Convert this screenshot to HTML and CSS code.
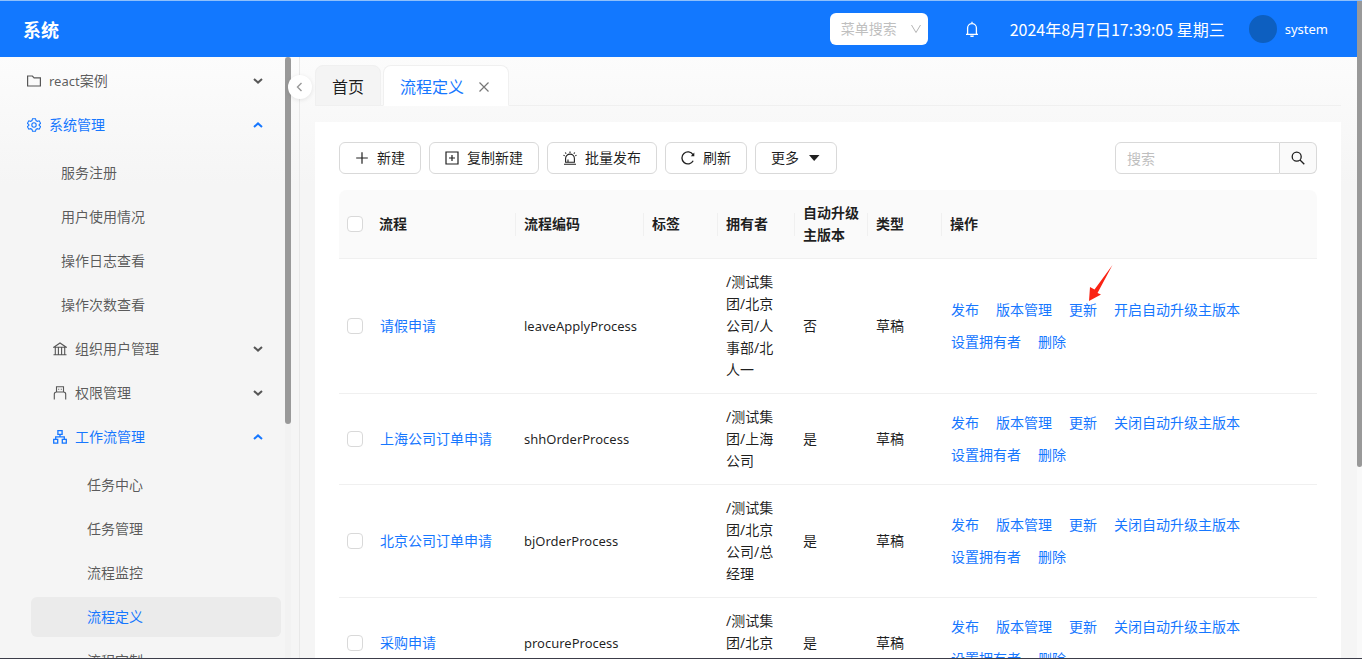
FILE: index.html
```
<!DOCTYPE html>
<html lang="zh-CN">
<head>
<meta charset="utf-8">
<title>系统</title>
<link rel="stylesheet" href="styles.css">
</head>
<body>
<svg class="defs" aria-hidden="true">
  <symbol id="down" viewBox="0 0 10 6"><path d="M1 1l4 3.600L9 1" fill="none" stroke="currentColor" stroke-width="2"/></symbol>
  <symbol id="up" viewBox="0 0 10 6"><path d="M1 5l4-3.600L9 5" fill="none" stroke="currentColor" stroke-width="2"/></symbol>
</svg>
<div class="app">
  <header class="header">
    <h1 class="brand">系统</h1>
    <div class="picker">
      <select class="picker-select" aria-label="菜单搜索"><option>菜单搜索</option></select>
      <svg class="picker-arrow" viewBox="0 0 12 12"><path d="M1.500 2L6 9.500 10.500 2" fill="none" stroke="currentColor"/></svg>
    </div>
    <button class="bell" aria-label="通知">
      <svg viewBox="0 0 16 16" width="16" height="16" fill="none" stroke="currentColor" stroke-width="1.300"><path d="M2 13.300h12M3.600 13V7a4.400 4.400 0 0 1 8.800 0v6M8 2.600V.8M6.500 14.600a1.600 1.200 0 0 0 3 0"/></svg>
    </button>
    <time class="clock">2024年8月7日17:39:05 星期三</time>
    <a class="user" href="#"><span class="avatar"></span><span class="latin">system</span></a>
  </header>
  <div class="body">
    <aside class="sidebar">
      <nav class="menu">
        <ul>
          <li><button class="item"><svg class="icon" viewBox="0 0 14 14" fill="none" stroke="currentColor" stroke-width="1.200"><path d="M.6 2h4.800l1.700 1.800h6.300v8.200H.6z"/></svg><span><span class="latin">react</span>案例</span><svg class="caret"><use href="#down"/></svg></button></li>
          <li>
            <button class="item open"><svg class="icon" viewBox="0 0 14 14" fill="none" stroke="currentColor" stroke-width="1.100"><path d="M5.500.7h3l.5 1.900 1.300.7 1.900-.5 1.400 2.500L12.200 6.600v.8l1.400 1.300-1.400 2.500-1.900-.5-1.300.7-.5 1.900h-3L5 11.400l-1.300-.7-1.900.5L.4 8.700l1.400-1.300v-.8L.4 5.300l1.400-2.500 1.900.5L5 2.600z"/><circle cx="7" cy="7" r="2.200"/></svg>系统管理<svg class="caret"><use href="#up"/></svg></button>
            <ul class="sub">
              <li><a class="item" href="#">服务注册</a></li>
              <li><a class="item" href="#">用户使用情况</a></li>
              <li><a class="item" href="#">操作日志查看</a></li>
              <li><a class="item" href="#">操作次数查看</a></li>
              <li><button class="item nested"><svg class="icon" viewBox="0 0 14 14" fill="none" stroke="currentColor" stroke-width="1.100"><path d="M.8 5.200L7 1l6.200 4.200zM.5 12.800h13M2.300 5.200v7.500M5.400 5.200v7.500M8.600 5.200v7.500M11.700 5.200v7.500"/></svg>组织用户管理<svg class="caret"><use href="#down"/></svg></button></li>
              <li><button class="item nested"><svg class="icon" viewBox="0 0 14 14" fill="none" stroke="currentColor" stroke-width="1.100"><path d="M3.500 6V.8h7V6M1.300 13.500V8.200Q1.300 6 3.500 6h7q2.200 0 2.200 2.200v5.300M5.200 3.200h1M7.800 3.200h1"/></svg>权限管理<svg class="caret"><use href="#down"/></svg></button></li>
              <li>
                <button class="item nested open"><svg class="icon" viewBox="0 0 14 14" fill="none" stroke="currentColor" stroke-width="1.300"><path d="M4.900.7h4.200v3.600H4.900zM.7 9.300h4v3.800h-4zM9.300 9.300h4v3.800h-4zM7 4.300v2.500M2.700 9.300V6.800h8.600v2.500"/></svg>工作流管理<svg class="caret"><use href="#up"/></svg></button>
                <ul class="sub deep">
                  <li><a class="item" href="#">任务中心</a></li>
                  <li><a class="item" href="#">任务管理</a></li>
                  <li><a class="item" href="#">流程监控</a></li>
                  <li><a class="item selected" href="#" aria-current="page">流程定义</a></li>
                  <li><a class="item" href="#">流程定制</a></li>
                </ul>
              </li>
            </ul>
          </li>
        </ul>
      </nav>
      <div class="side-scroll"><div class="side-thumb"></div></div>
      <button class="collapse" aria-label="收起菜单"><svg viewBox="0 0 10 10" width="10" height="10"><path d="M6.500 1L2.500 5l4 4" fill="none" stroke="currentColor" stroke-width="1.400"/></svg></button>
    </aside>
    <main class="main">
      <div class="tabs" role="tablist">
        <button class="tab" role="tab">首页</button>
        <button class="tab active" role="tab" aria-selected="true">流程定义<svg viewBox="0 0 12 12" width="12" height="12"><path d="M1.500 1.500l9 9M10.500 1.500l-9 9" stroke="#777" stroke-width="1.200"/></svg></button>
      </div>
      <section class="card">
        <div class="toolbar">
          <button class="btn"><svg viewBox="0 0 14 14" fill="none" stroke="currentColor" stroke-width="1.200"><path d="M7 1.200v11.600M1.200 7h11.600"/></svg>新建</button>
          <button class="btn"><svg viewBox="0 0 14 14" fill="none" stroke="currentColor" stroke-width="1.200"><path d="M1 1h12v12H1zM7 4v6M4 7h6"/></svg>复制新建</button>
          <button class="btn"><svg viewBox="0 0 14 14" fill="none" stroke="currentColor" stroke-width="1.100"><path d="M1 13.300h12M2.600 11.300V7.500a4.400 4.400 0 0 1 8.800 0v3.800zM5 11V8.500M7 .5v1.500M2.200 1.500l1 1.200M11.800 1.500l-1 1.200M.5 4.300l1.200.5M13.500 4.300l-1.200.5"/></svg>批量发布</button>
          <button class="btn"><svg viewBox="0 0 14 14"><path d="M12.200 9.800A6 6 0 1 1 12 3.700" fill="none" stroke="currentColor" stroke-width="1.300"/><path d="M13.300 1.500v3.700H9.800z" fill="currentColor"/></svg>刷新</button>
          <button class="btn">更多<svg viewBox="0 0 14 14"><path d="M2 4h10.500L7.200 10z" fill="currentColor"/></svg></button>
          <form class="search">
            <input class="search-input" type="text" placeholder="搜索" aria-label="搜索">
            <button class="search-btn" type="button" aria-label="执行搜索"><svg viewBox="0 0 14 14" width="14" height="14" fill="none" stroke="currentColor" stroke-width="1.300"><circle cx="5.700" cy="5.700" r="4.500"/><path d="M9 9l4.300 4.300"/></svg></button>
          </form>
        </div>
        <table class="table">
          <colgroup><col class="c-check"><col class="c-name"><col class="c-code"><col class="c-tag"><col class="c-owner"><col class="c-auto"><col class="c-type"><col></colgroup>
          <thead>
            <tr><th class="plain"><input class="check" type="checkbox" aria-label="全选"></th><th>流程</th><th>流程编码</th><th>标签</th><th>拥有者</th><th>自动升级主版本</th><th>类型</th><th class="plain">操作</th></tr>
          </thead>
          <tbody>
            <tr>
              <td><input class="check" type="checkbox" aria-label="请假申请"></td><td><a href="#">请假申请</a></td><td class="latin">leaveApplyProcess</td><td></td><td class="owner">/测试集团/北京公司/人事部/北人一</td><td>否</td><td>草稿</td>
              <td><div class="actions"><a href="#">发布</a><a href="#">版本管理</a><a class="pointed" href="#">更新<svg class="pointer" viewBox="0 0 25 37" width="25" height="37"><path d="M24.500 0L6.500 24.500 2 22 1 36 13 29.500 9.500 28z" fill="#fa2314"/></svg></a><a href="#">开启自动升级主版本</a><a href="#">设置拥有者</a><a href="#">删除</a></div></td>
            </tr>
            <tr>
              <td><input class="check" type="checkbox" aria-label="上海公司订单申请"></td><td><a href="#">上海公司订单申请</a></td><td class="latin">shhOrderProcess</td><td></td><td class="owner">/测试集团/上海公司</td><td>是</td><td>草稿</td>
              <td><div class="actions"><a href="#">发布</a><a href="#">版本管理</a><a href="#">更新</a><a href="#">关闭自动升级主版本</a><a href="#">设置拥有者</a><a href="#">删除</a></div></td>
            </tr>
            <tr>
              <td><input class="check" type="checkbox" aria-label="北京公司订单申请"></td><td><a href="#">北京公司订单申请</a></td><td class="latin">bjOrderProcess</td><td></td><td class="owner">/测试集团/北京公司/总经理</td><td>是</td><td>草稿</td>
              <td><div class="actions"><a href="#">发布</a><a href="#">版本管理</a><a href="#">更新</a><a href="#">关闭自动升级主版本</a><a href="#">设置拥有者</a><a href="#">删除</a></div></td>
            </tr>
            <tr>
              <td><input class="check" type="checkbox" aria-label="采购申请"></td><td><a href="#">采购申请</a></td><td class="latin">procureProcess</td><td></td><td class="owner">/测试集团/北京公司</td><td>是</td><td>草稿</td>
              <td><div class="actions"><a href="#">发布</a><a href="#">版本管理</a><a href="#">更新</a><a href="#">关闭自动升级主版本</a><a href="#">设置拥有者</a><a href="#">删除</a></div></td>
            </tr>
          </tbody>
        </table>
      </section>
    </main>
  </div>
</div>
<div class="page-scroll"><div class="page-thumb"></div></div>
</body>
</html>
```

FILE: styles.css
```
* { box-sizing: border-box; }
body {
  display: flex;
  height: 100vh;
  margin: 0;
  overflow: hidden;
  border-top: 1px solid #8fc0fb;
  border-bottom: 1px solid #3c3d49;
  background: linear-gradient(#fff, #f5f5f5 28%);
  color: rgba(0, 0, 0, 0.88);
  font-family: "Noto Sans", "Noto Sans CJK SC", sans-serif;
  font-size: 14px;
  line-height: 22px;
}
button, input, select { font: inherit; color: inherit; }
button { margin: 0; padding: 0; border: 0; background: none; cursor: pointer; }
ul { margin: 0; padding: 0; list-style: none; }
a { color: #1677ff; text-decoration: none; }
svg { flex: none; }
.defs { position: absolute; width: 0; height: 0; }
.latin { font-size: 13px; }

.app { display: flex; flex: 1; flex-direction: column; min-width: 0; }
.header {
  display: flex;
  flex: none;
  align-items: center;
  height: 56px;
  padding: 0 29px 0 23px;
  background: #1278ff;
  color: #fff;
}
.brand { margin: 0 auto 0 0; font-family: "Noto Sans CJK SC", sans-serif; font-size: 18px; line-height: 28px; }
.picker { position: relative; }
.picker-select {
  display: block;
  width: 98px;
  height: 32px;
  padding: 0 11px;
  appearance: none;
  border: 0;
  border-radius: 6px;
  background: #fff;
  color: #bfbfbf;
}
.picker-arrow { position: absolute; top: 10px; right: 6px; width: 12px; height: 12px; color: #b5b5b5; pointer-events: none; }
.bell { display: flex; margin: 0 30px 0 36px; }
.clock { font-family: "Noto Sans CJK SC", sans-serif; font-size: 16px; }
.user { display: flex; align-items: center; gap: 8px; margin-left: 24px; color: #fff; }
.avatar { width: 28px; height: 28px; border-radius: 50%; background: #0d5fc0; }

.body { display: flex; flex: 1; min-height: 0; }
.sidebar {
  position: relative;
  z-index: 1;
  display: flex;
  flex: none;
  width: 300px;
  border-right: 1px solid #e8e8e8;
}
.menu { flex: 1; padding: 4px 4px 0 5px; overflow: hidden; color: rgba(0, 0, 0, 0.65); }
.menu li { margin-bottom: 4px; }
.item {
  display: flex;
  align-items: center;
  width: 100%;
  height: 40px;
  padding: 0 18px 0 22px;
  border-radius: 6px;
  color: inherit;
  white-space: nowrap;
}
.icon { width: 14px; height: 14px; margin-right: 8px; }
.caret { width: 10px; height: 6px; margin-left: auto; }
.sub { padding: 8px 0 0; }
.sub .item { padding-left: 56px; }
.sub .item.nested { padding-left: 48px; }
.sub.deep { padding-left: 26px; }
.item.open, .sub .item.selected { color: #1677ff; }
.item.selected { background: #ebebeb; }
.side-scroll { flex: none; width: 6px; margin-right: 8px; background: #f2f2f2; }
.side-thumb { height: 61%; border-radius: 3px; background: #999; }
.collapse {
  position: absolute;
  top: 18px;
  right: -13px;
  display: flex;
  align-items: center;
  justify-content: center;
  width: 24px;
  height: 24px;
  border-radius: 50%;
  background: #fff;
  box-shadow: 0 1px 4px rgba(0, 0, 0, 0.1);
  color: #999;
}

.main { flex: 1; min-width: 0; padding: 8px 16px 0 15px; }
.tabs { display: flex; gap: 2px; border-bottom: 1px solid #f0f0f0; margin-bottom: 16px; }
.tab {
  display: flex;
  align-items: center;
  gap: 14px;
  height: 41px;
  margin-bottom: -1px;
  padding: 2px 16px 0;
  border: 1px solid #f0f0f0;
  border-radius: 8px 8px 0 0;
  background: #f4f4f4;
  font-size: 16px;
}
.tab.active { padding-right: 18px; border-bottom-color: #fff; background: #fff; color: #1677ff; }
.card { padding: 20px 24px; background: #fff; }
.toolbar { display: flex; gap: 8px; margin-bottom: 16px; }
.btn {
  display: flex;
  align-items: center;
  gap: 8px;
  height: 32px;
  padding: 0 15px;
  border: 1px solid #d9d9d9;
  border-radius: 6px;
  background: #fff;
  white-space: nowrap;
}
.btn svg { width: 14px; height: 14px; }
.search { display: flex; margin: 0 0 0 auto; }
.search-input {
  width: 165px;
  height: 32px;
  padding: 0 11px;
  border: 1px solid #d9d9d9;
  border-radius: 6px 0 0 6px;
  background: #fff;
}
.search-input::placeholder { color: #bfbfbf; }
.search-btn {
  display: flex;
  align-items: center;
  justify-content: center;
  width: 37px;
  height: 32px;
  border: 1px solid #d9d9d9;
  border-left: 0;
  border-radius: 0 6px 6px 0;
  background: #fafafa;
}

.table { width: 100%; table-layout: fixed; border-collapse: separate; border-spacing: 0; }
.c-check { width: 32px; }
.c-name { width: 145px; }
.c-code { width: 128px; }
.c-tag, .c-type { width: 74px; }
.c-owner { width: 77px; }
.c-auto { width: 73px; }
.table th, .table td { padding: 12px 8px; border-bottom: 1px solid #f0f0f0; text-align: left; }
.table th {
  background: linear-gradient(#f0f0f0, #f0f0f0) right center / 1px 23px no-repeat #fafafa;
  font-weight: 600;
}
.table th.plain { background: #fafafa; }
.table th:first-child { border-top-left-radius: 8px; }
.table th:last-child { border-top-right-radius: 8px; }
.table td.owner { padding-right: 16px; }
.table a { padding-left: 1px; }
.check {
  display: block;
  width: 16px;
  height: 16px;
  margin: 0;
  appearance: none;
  border: 1px solid #d9d9d9;
  border-radius: 4px;
  background: #fff;
}
.actions { display: flex; flex-wrap: wrap; column-gap: 16px; line-height: 32px; }
.pointed { position: relative; }
.pointer { position: absolute; top: -29px; left: 20px; }

.page-scroll { flex: none; width: 5px; background: #f9f9f9; }
.page-thumb { height: 71%; border-radius: 0 0 3px 3px; background: #999; }
```
